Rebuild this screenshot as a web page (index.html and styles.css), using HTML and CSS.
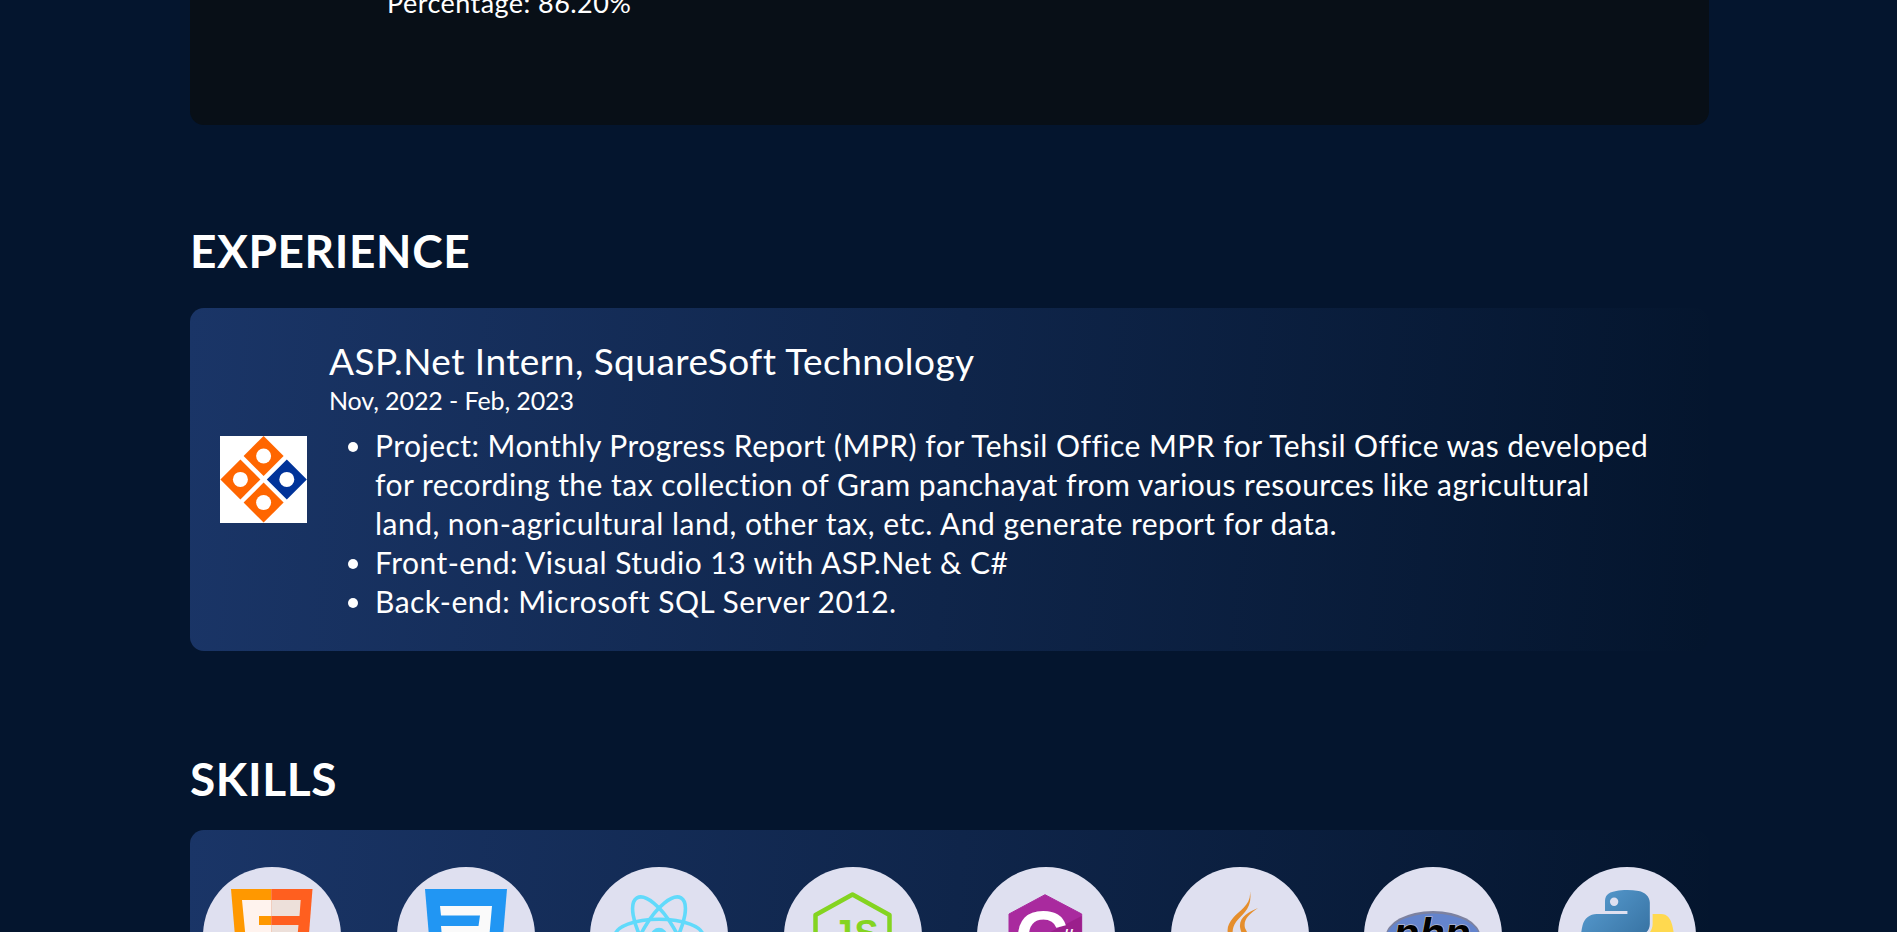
FILE: index.html
```html
<!DOCTYPE html>
<html lang="en">
<head>
    <meta charset="UTF-8">
    <title>Resume</title>
    <link rel="stylesheet" href="styles.css">
</head>
<body>
    <div class="education-card">
        <p class="education-line">Percentage: 86.20%</p>
    </div>

    <h2 class="section-title experience-title">EXPERIENCE</h2>
    <div class="experience-card">
        <svg class="company-logo" viewBox="0 0 87 87">
            <rect width="87" height="87" fill="#fff"/>
            <path d="M43.6 0L63.6 20L43.6 40L23.6 20Z" fill="#ff6600"/>
            <path d="M20.4 23.4L40.4 43.4L20.4 63.4L0.4 43.4Z" fill="#ff6600"/>
            <path d="M66.8 23.4L86.8 43.4L66.8 63.4L46.8 43.4Z" fill="#003399"/>
            <path d="M43.6 46.6L63.6 66.6L43.6 86.6L23.6 66.6Z" fill="#ff6600"/>
            <circle cx="43.6" cy="20" r="7.5" fill="#fff"/>
            <circle cx="20.4" cy="43.4" r="7.5" fill="#fff"/>
            <circle cx="66.8" cy="43.4" r="7.5" fill="#fff"/>
            <circle cx="43.6" cy="66.6" r="7.5" fill="#fff"/>
        </svg>
        <div class="experience-text">
            <h3 class="job-title">ASP.Net Intern, SquareSoft Technology</h3>
            <p class="job-date">Nov, 2022 - Feb, 2023</p>
            <ul class="job-list">
                <li>Project: Monthly Progress Report (MPR) for Tehsil Office MPR for Tehsil Office was developed for recording the tax collection of Gram panchayat from various resources like agricultural land, non-agricultural land, other tax, etc. And generate report for data.</li>
                <li>Front-end: Visual Studio 13 with ASP.Net &amp; C#</li>
                <li>Back-end: Microsoft SQL Server 2012.</li>
            </ul>
        </div>
    </div>

    <h2 class="section-title skills-title">SKILLS</h2>
    <div class="skills-card">
        <div class="skill-icon">
            <svg viewBox="0 0 92 92">
                <path d="M5 -1H45.3V92L12 82Z" fill="#ff9800"/>
                <path d="M45.3 -1H86.5L80 82L45.3 92Z" fill="#ff5f1f"/>
                <path d="M16 10H45.3V26H33V35H45.3V52H34L35 62L45.3 66V79L22 72Z" fill="#fff3ee"/>
                <path d="M45.3 10H74.7L73.5 26H45.3V35H72.5L69 72L45.3 79V66L57 62L58 52H45.3Z" fill="#ede0da"/>
            </svg>
        </div>
        <div class="skill-icon">
            <svg viewBox="0 0 92 92">
                <path d="M5 -1H87L80 82L46 92L12 82Z" fill="#2196f3"/>
                <path d="M20 16H72L67 72L46 78L25 72L24 58H36L36.5 65L46 68L55.5 65L57 47H22L21 36H58.5L60 25.5H21Z" fill="#fafafa"/>
            </svg>
        </div>
        <div class="skill-icon">
            <svg viewBox="-11.5 -11.5 23 23">
                <circle r="2.05" fill="#61dafb"/>
                <g fill="none" stroke="#61dafb" stroke-width="0.9">
                    <ellipse rx="11" ry="4.2"/>
                    <ellipse rx="11" ry="4.2" transform="rotate(60)"/>
                    <ellipse rx="11" ry="4.2" transform="rotate(120)"/>
                </g>
            </svg>
        </div>
        <div class="skill-icon">
            <svg viewBox="0 0 92 92">
                <path d="M45.5 4.5L82.5 25V67L45.5 88L8.5 67V25Z" fill="none" stroke="#84d420" stroke-width="4.5" stroke-linejoin="round"/>
                <text x="49.5" y="55.5" class="node-text">JS</text>
            </svg>
        </div>
        <div class="skill-icon">
            <svg viewBox="0 0 92 92">
                <path d="M45 4.7L81.7 24V67L45 88L9 67V24Z" fill="#a92a9e" stroke="#a92a9e" stroke-linejoin="round"/>
                <path d="M81.7 26L9 63V67L45 88L81.7 67Z" fill="#9b1f8c"/>
                <text x="15" y="73" class="csharp-text">C</text>
                <text x="62" y="54" class="csharp-sharp">#</text>
            </svg>
        </div>
        <div class="skill-icon">
            <svg viewBox="0 0 92 92">
                <path d="M55.5 -1C59 14 46 20 39 28C33 35 31 42 38 52C40 56 41 58 42 60C38 44 37 40 42 32C48 24 60 18 55.5 -1Z" fill="#e58e2c"/>
                <path d="M64 18C55 22 45 27 46 37C47 45 53 48 50 60C58 50 54 44 51 38C49 30 55 24 64 18Z" fill="#e58e2c"/>
                <path d="M26 65C36 70 58 70 68 65C62 74 30 74 26 65ZM28 76C38 80 56 80 66 76C60 84 34 84 28 76ZM34 86C42 89 54 89 60 86C54 92 40 92 34 86Z" fill="#5382a1"/>
            </svg>
        </div>
        <div class="skill-icon">
            <svg viewBox="0 0 92 92">
                <ellipse cx="46" cy="47" rx="47.5" ry="26" fill="#7d82a0"/>
                <ellipse cx="46" cy="48.5" rx="47" ry="25" fill="#6484cc"/>
                <text x="45" y="58" class="php-text">php</text>
            </svg>
        </div>
        <div class="skill-icon">
            <svg viewBox="0 0 110 110">
                <defs>
                    <linearGradient id="pyBlue" x1="0" y1="0" x2="1" y2="1">
                        <stop offset="0" stop-color="#5a9fd4"/>
                        <stop offset="1" stop-color="#306998"/>
                    </linearGradient>
                </defs>
                <path d="M54.919.001c-4.584.022-8.962.413-12.813 1.095C30.76 3.099 28.7 7.295 28.7 15.032v10.219h26.813v3.406H18.638c-7.793 0-14.616 4.684-16.75 13.594-2.462 10.213-2.571 16.586 0 27.25 1.905 7.938 6.457 13.594 14.25 13.594h9.218v-12.25c0-8.85 7.657-16.656 16.75-16.656h26.782c7.454 0 13.406-6.138 13.406-13.625V15.032c0-7.267-6.13-12.726-13.406-13.937C64.282.328 59.502-.02 54.918.001z" fill="url(#pyBlue)"/>
                <circle cx="39.6" cy="14.1" r="5" fill="#dfe0f0"/>
                <path d="M85.638 28.657v11.906c0 9.231-7.826 17-16.75 17H42.106c-7.336 0-13.406 6.279-13.406 13.625V96.72c0 7.267 6.319 11.542 13.406 13.625 8.488 2.496 16.627 2.947 26.782 0 6.75-1.954 13.406-5.888 13.406-13.625V86.501H55.513v-3.406h40.188c7.793 0 10.696-5.436 13.406-13.594 2.799-8.399 2.68-16.476 0-27.25-1.926-7.757-5.604-13.594-13.406-13.594z" fill="#ffd94f"/>
            </svg>
        </div>
    </div>
</body>
</html>
```

FILE: styles.css
```css
html, body {
    height: 932px;
    overflow: hidden;
}
body {
    margin: 0;
    padding: 0 188px 0 190px;
    background-color: #04152e;
    color: #fff;
    font-family: "Lato", sans-serif;
}
.education-card {
    height: 185px;
    margin-top: -60px;
    padding: 47px 197px 0;
    box-sizing: border-box;
    background-color: #080f17;
    border-radius: 14px;
}
.education-line {
    margin: 0;
    font-size: 27px;
    letter-spacing: 0.45px;
    line-height: 32px;
}
.section-title {
    margin: 0;
    font-size: 46px;
    font-weight: 700;
    letter-spacing: 0.6px;
    line-height: 56px;
}
.experience-title {
    margin-top: 98px;
    margin-bottom: 29px;
}
.skills-title {
    margin-top: 100px;
    margin-bottom: 23px;
}
.experience-card, .skills-card {
    border-radius: 14px;
    background-image: linear-gradient(95deg, #1a3567, #04152d);
}
.experience-card {
    display: flex;
    align-items: center;
    gap: 22px;
    height: 343px;
    box-sizing: border-box;
    padding: 0 54px 0 30px;
}
.company-logo {
    flex: 0 0 87px;
    width: 87px;
    height: 87px;
}
.job-title {
    margin: 0;
    font-size: 37px;
    font-weight: 400;
    letter-spacing: 0.46px;
    line-height: 46px;
}
.job-date {
    margin: 0 0 10px;
    font-size: 25px;
    letter-spacing: -0.1px;
    line-height: 32px;
}
.job-list {
    margin: 0;
    padding-left: 46px;
    font-size: 30px;
    letter-spacing: 0.47px;
    line-height: 39px;
}
.skills-card {
    display: flex;
    justify-content: space-between;
    height: 300px;
    box-sizing: border-box;
    padding: 37px 13px 0;
}
.skill-icon {
    flex: 0 0 138px;
    width: 138px;
    height: 138px;
    box-sizing: border-box;
    padding: 23px;
    border-radius: 50%;
    background-color: #dfe0f0;
}
.skill-icon svg {
    display: block;
    width: 92px;
    height: 92px;
    overflow: visible;
}
.node-text {
    fill: #84d420;
    font-family: "Liberation Sans", sans-serif;
    font-size: 36px;
    font-weight: 700;
    letter-spacing: 2px;
    text-anchor: middle;
}
.csharp-text {
    fill: #fff;
    font-family: "Liberation Sans", sans-serif;
    font-size: 74px;
    font-weight: 700;
}
.csharp-sharp {
    fill: #fff;
    font-family: "Liberation Sans", sans-serif;
    font-size: 22px;
    font-weight: 700;
}
.php-text {
    fill: #000;
    stroke: #b4b8cc;
    stroke-width: 1.5px;
    paint-order: stroke;
    font-family: "Liberation Sans", sans-serif;
    font-size: 42px;
    font-style: italic;
    font-weight: 700;
    text-anchor: middle;
}
```
